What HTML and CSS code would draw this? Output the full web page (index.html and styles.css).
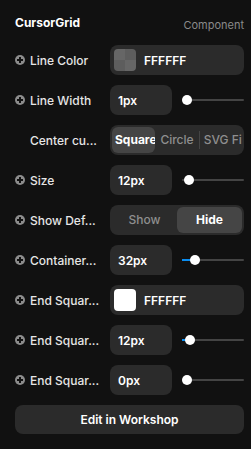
FILE: index.html
```html
<!DOCTYPE html>
<html>
<head>
    <meta charset="UTF-8">
    <title>CursorGrid</title>
    <link rel="stylesheet" href="styles.css">
</head>
<body>

<div class="panel">
    <div class="head">
        <div class="title">CursorGrid</div>
        <div class="kind">Component</div>
    </div>

    <div class="row">
        <div class="label"><span class="plus"></span>Line Color</div>
        <div class="field color">
            <span class="swatch checker"></span>
            <span class="value">FFFFFF</span>
        </div>
    </div>

    <div class="row">
        <div class="label"><span class="plus"></span>Line Width</div>
        <div class="num-slider">
            <div class="field num"><span class="value">1px</span></div>
            <div class="slider"><span class="fill" style="width: 5px"></span><span class="knob" style="left: 5px"></span></div>
        </div>
    </div>

    <div class="row">
        <div class="label no-icon">Center cu...</div>
        <div class="seg three">
            <div class="opt on">Square</div>
            <div class="opt">Circle</div>
            <div class="opt sep">SVG File</div>
        </div>
    </div>

    <div class="row">
        <div class="label"><span class="plus"></span>Size</div>
        <div class="num-slider">
            <div class="field num"><span class="value">12px</span></div>
            <div class="slider"><span class="fill" style="width: 7px"></span><span class="knob" style="left: 7px"></span></div>
        </div>
    </div>

    <div class="row">
        <div class="label"><span class="plus"></span>Show Def...</div>
        <div class="seg two">
            <div class="opt">Show</div>
            <div class="opt on">Hide</div>
        </div>
    </div>

    <div class="row">
        <div class="label"><span class="plus"></span>Container...</div>
        <div class="num-slider">
            <div class="field num"><span class="value">32px</span></div>
            <div class="slider"><span class="fill blue" style="width: 13px"></span><span class="knob" style="left: 13px"></span></div>
        </div>
    </div>

    <div class="row">
        <div class="label"><span class="plus"></span>End Squar...</div>
        <div class="field color">
            <span class="swatch white"></span>
            <span class="value">FFFFFF</span>
        </div>
    </div>

    <div class="row">
        <div class="label"><span class="plus"></span>End Squar...</div>
        <div class="num-slider">
            <div class="field num"><span class="value">12px</span></div>
            <div class="slider"><span class="fill blue" style="width: 8px"></span><span class="knob" style="left: 8px"></span></div>
        </div>
    </div>

    <div class="row">
        <div class="label"><span class="plus"></span>End Squar...</div>
        <div class="num-slider">
            <div class="field num"><span class="value">0px</span></div>
            <div class="slider"><span class="fill" style="width: 5px"></span><span class="knob" style="left: 5px"></span></div>
        </div>
    </div>

    <div class="button">Edit in Workshop</div>
</div>

</body>
</html>
```

FILE: styles.css
```css
html, body {
    margin: 0;
    padding: 0;
    height: 100%;
    overflow: hidden;
    background: #111111;
    font-family: Inter, "Liberation Sans", sans-serif;
    font-size: 12px;
    color: #eeeeee;
}

.panel {
    padding: 10px 7px 0 15px;
    display: flex;
    flex-direction: column;
    gap: 10px;
}

.head {
    height: 25px;
    display: flex;
    align-items: center;
    justify-content: space-between;
}

.title {
    font-weight: 700;
    color: #ffffff;
}

.kind {
    font-size: 11px;
    color: #8a8a8a;
    padding-top: 4px;
}

.row {
    height: 30px;
    display: grid;
    grid-template-columns: 95px 1fr;
    align-items: center;
}

.label {
    display: flex;
    align-items: center;
    gap: 5px;
    font-weight: 500;
    color: #e6e6e6;
    white-space: nowrap;
}

.label.no-icon {
    padding-left: 15px;
}

.plus {
    width: 10px;
    height: 10px;
    border-radius: 50%;
    background: #8c8c8c;
    position: relative;
    flex: none;
}

.plus::before, .plus::after {
    content: "";
    position: absolute;
    background: #111111;
    left: 2px;
    top: 4px;
    width: 6px;
    height: 2px;
}

.plus::after {
    left: 4px;
    top: 2px;
    width: 2px;
    height: 6px;
}

.field {
    height: 30px;
    background: #2b2b2b;
    border-radius: 8px;
    display: flex;
    align-items: center;
    box-sizing: border-box;
}

.field.color {
    padding-left: 4px;
    gap: 8px;
}

.field.num {
    width: 62px;
    padding-left: 8px;
}

.value {
    font-weight: 600;
    color: #ffffff;
}

.swatch {
    width: 22px;
    height: 22px;
    border-radius: 4px;
}

.checker {
    background: conic-gradient(#5d5d5d 0 25%, #666666 0 50%, #5d5d5d 0 75%, #666666 0);
}

.white {
    background: #ffffff;
}

.num-slider {
    display: flex;
    align-items: center;
    gap: 10px;
}

.slider {
    flex: 1;
    height: 2px;
    background: #444444;
    position: relative;
    border-radius: 1px;
}

.fill {
    position: absolute;
    left: 0;
    top: 0;
    height: 2px;
}

.fill.blue {
    background: #0a8cf0;
}

.knob {
    position: absolute;
    top: -4px;
    width: 10px;
    height: 10px;
    margin-left: -5px;
    border-radius: 50%;
    background: #ffffff;
}

.seg {
    height: 30px;
    background: #2b2b2b;
    border-radius: 8px;
    padding: 2px;
    box-sizing: border-box;
    display: grid;
    grid-auto-flow: column;
    grid-auto-columns: 1fr;
    align-items: center;
}

.opt {
    height: 26px;
    line-height: 26px;
    text-align: center;
    overflow: hidden;
    white-space: nowrap;
    color: #8f8f8f;
    font-weight: 500;
    border-radius: 6px;
    padding: 0 2px;
}

.opt.on {
    background: #454545;
    color: #ffffff;
    font-weight: 700;
}

.three .opt {
    padding: 0 0 0 3px;
    text-align: left;
}

.three .opt:nth-child(2) {
    text-align: center;
    padding: 0;
}

.opt.sep {
    border-left: 1px solid #444444;
    border-radius: 0;
    height: 18px;
    line-height: 18px;
    padding-left: 4px;
}

.button {
    height: 29px;
    background: #2b2b2b;
    border-radius: 8px;
    display: flex;
    align-items: center;
    justify-content: center;
    font-weight: 600;
    color: #ffffff;
}
```
